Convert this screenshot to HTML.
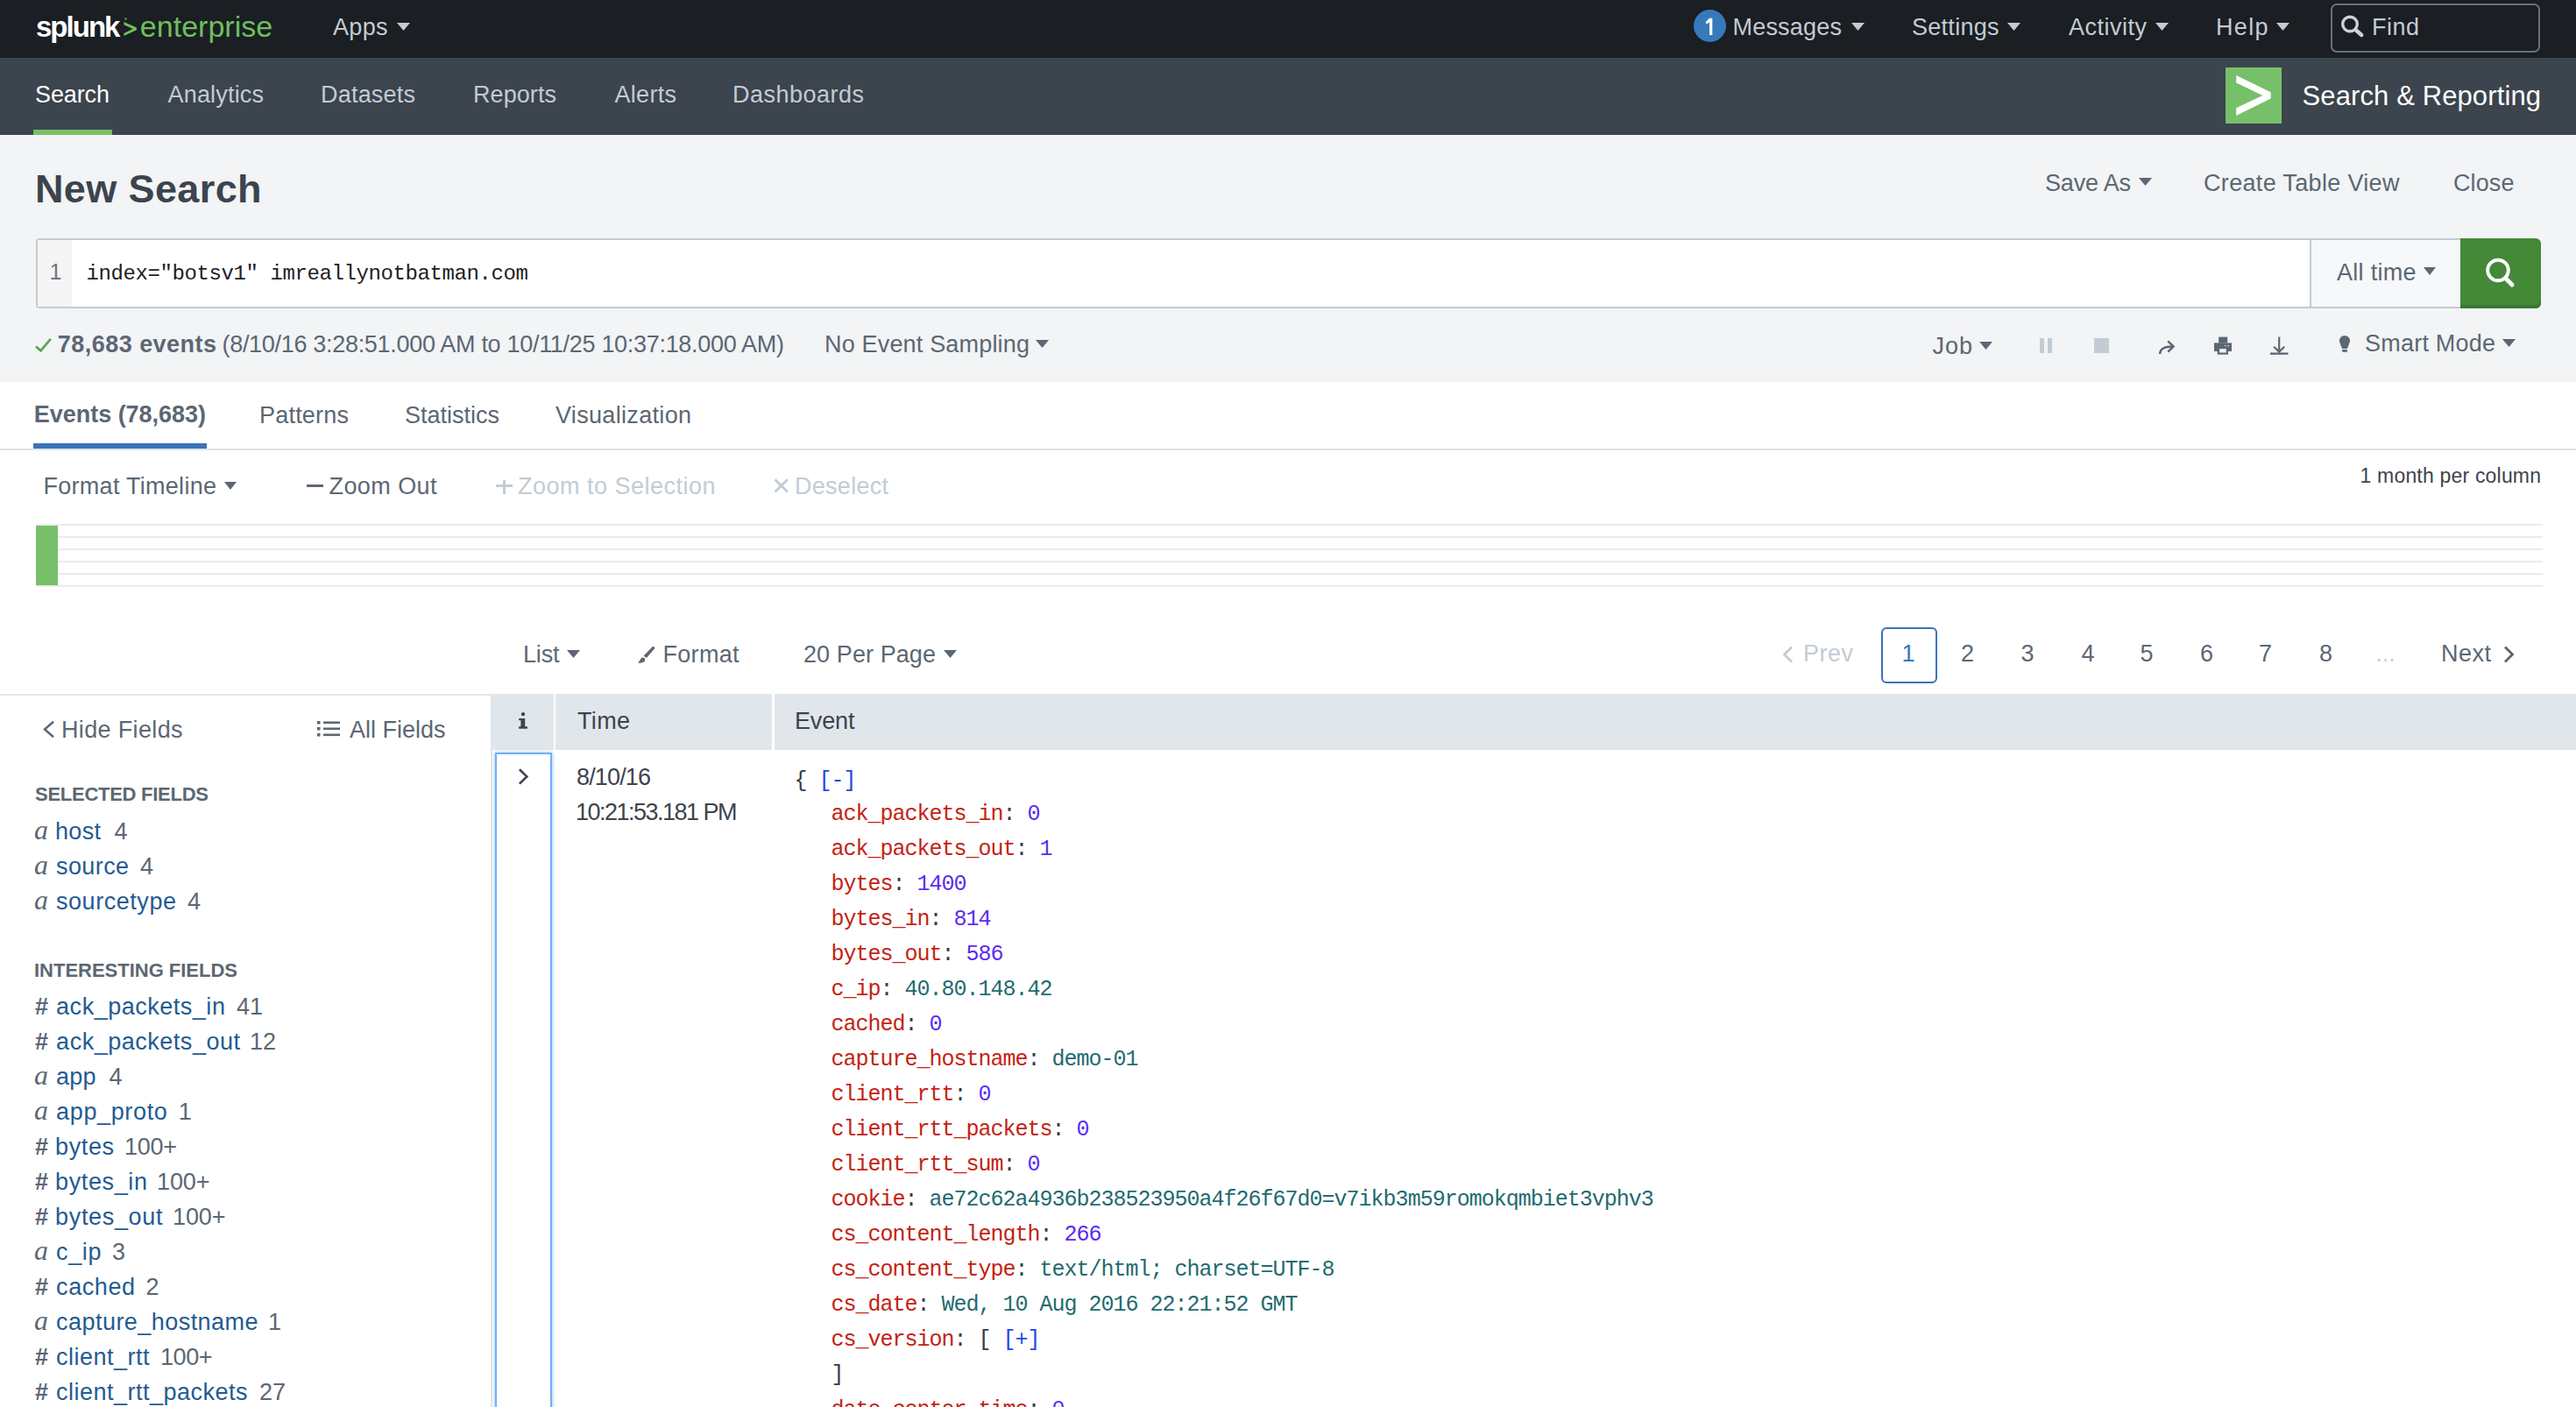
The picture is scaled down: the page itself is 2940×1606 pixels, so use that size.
<!DOCTYPE html>
<html><head><meta charset="utf-8"><title>Search | Splunk</title>
<style>
html,body{margin:0;padding:0;width:2940px;height:1606px;overflow:hidden;background:#fff}
@media (max-width:2000px){html{zoom:0.5}}
.t{position:absolute;white-space:nowrap}
.b{position:absolute}
</style></head><body>
<div class="b" style="left:0px;top:0px;width:2940px;height:66px;background:#1b1e22;"></div>
<div id="t41_42" class="t" style="left:41.00px;top:11px;font:bold 33px/40px 'Liberation Sans', sans-serif;color:#ffffff;letter-spacing:-1.985px;">splunk</div>
<svg class="b" style="left:141px;top:24px;overflow:visible" width="16" height="18" viewBox="0 0 16 18"><polygon points="0.4,1 14.9,7.6 14.9,10.2 0.4,16.9 0.4,13.9 10.5,8.9 0.4,4.2" fill="#6ebf5f"/><circle cx="2.4" cy="-2.5" r="1.4" fill="#4f8a45"/></svg>
<div id="t159_42" class="t" style="left:159.80px;top:10px;font:normal 34px/41px 'Liberation Sans', sans-serif;color:#6ebf5f;letter-spacing:0.022px;">enterprise</div>
<div id="t380_40" class="t" style="left:380.00px;top:15px;font:normal 27px/32px 'Liberation Sans', sans-serif;color:#c3cbd4;letter-spacing:0.322px;">Apps</div>
<svg class="b" style="left:453px;top:26px" width="15" height="9" viewBox="0 0 15 9"><polygon points="0,0 15,0 7.5,9" fill="#c3cbd4"/></svg>
<div class="b" style="left:1933px;top:11px;width:37px;height:37px;border-radius:50%;background:#3779bd"></div>
<svg class="b" style="left:1946px;top:20px;overflow:visible" width="10" height="21" viewBox="0 0 10 21"><polygon points="5,0.8 8.3,0.8 8.3,20 5,20 5,5.5 2,7.6 0.5,5.2" fill="#ffffff"/></svg>
<div id="t1979_40" class="t" style="left:1977.50px;top:15px;font:normal 27px/32px 'Liberation Sans', sans-serif;color:#c3cbd4;letter-spacing:0.205px;">Messages</div>
<svg class="b" style="left:2113px;top:26px" width="15" height="9" viewBox="0 0 15 9"><polygon points="0,0 15,0 7.5,9" fill="#c3cbd4"/></svg>
<div id="t2182_40" class="t" style="left:2182.00px;top:15px;font:normal 27px/32px 'Liberation Sans', sans-serif;color:#c3cbd4;letter-spacing:0.278px;">Settings</div>
<svg class="b" style="left:2291px;top:26px" width="15" height="9" viewBox="0 0 15 9"><polygon points="0,0 15,0 7.5,9" fill="#c3cbd4"/></svg>
<div id="t2361_40" class="t" style="left:2361.00px;top:15px;font:normal 27px/32px 'Liberation Sans', sans-serif;color:#c3cbd4;letter-spacing:0.499px;">Activity</div>
<svg class="b" style="left:2460px;top:26px" width="15" height="9" viewBox="0 0 15 9"><polygon points="0,0 15,0 7.5,9" fill="#c3cbd4"/></svg>
<div id="t2530_40" class="t" style="left:2529.00px;top:15px;font:normal 27px/32px 'Liberation Sans', sans-serif;color:#c3cbd4;letter-spacing:1.320px;">Help</div>
<svg class="b" style="left:2598px;top:26px" width="15" height="9" viewBox="0 0 15 9"><polygon points="0,0 15,0 7.5,9" fill="#c3cbd4"/></svg>
<div class="b" style="left:2660px;top:4px;width:239px;height:56px;box-sizing:border-box;border:2px solid #68717c;border-radius:7px"></div>
<svg class="b" style="left:2671px;top:16px;overflow:visible" width="28" height="28" viewBox="0 0 28 28"><circle cx="11" cy="11.5" r="8.3" fill="none" stroke="#cdd2d8" stroke-width="3.4"/><line x1="17.5" y1="18" x2="24.2" y2="24" stroke="#cdd2d8" stroke-width="4.4" stroke-linecap="round"/></svg>
<div id="t2708_40" class="t" style="left:2707.00px;top:15px;font:normal 27px/32px 'Liberation Sans', sans-serif;color:#c3cbd4;letter-spacing:0.495px;">Find</div>
<div class="b" style="left:0px;top:66px;width:2940px;height:88px;background:#3c444d;"></div>
<div id="t40_117" class="t" style="left:40.00px;top:92px;font:normal 27px/32px 'Liberation Sans', sans-serif;color:#ffffff;letter-spacing:-0.107px;">Search</div>
<div id="t191_117" class="t" style="left:191.50px;top:92px;font:normal 27px/32px 'Liberation Sans', sans-serif;color:#c3cbd4;letter-spacing:0.184px;">Analytics</div>
<div id="t368_117" class="t" style="left:366.00px;top:92px;font:normal 27px/32px 'Liberation Sans', sans-serif;color:#c3cbd4;letter-spacing:0.208px;">Datasets</div>
<div id="t541_117" class="t" style="left:540.00px;top:92px;font:normal 27px/32px 'Liberation Sans', sans-serif;color:#c3cbd4;letter-spacing:0.079px;">Reports</div>
<div id="t701_117" class="t" style="left:701.50px;top:92px;font:normal 27px/32px 'Liberation Sans', sans-serif;color:#c3cbd4;letter-spacing:0.298px;">Alerts</div>
<div id="t838_117" class="t" style="left:836.00px;top:92px;font:normal 27px/32px 'Liberation Sans', sans-serif;color:#c3cbd4;letter-spacing:0.491px;">Dashboards</div>
<div class="b" style="left:38px;top:148px;width:90px;height:6px;background:#78c06a;"></div>
<div class="b" style="left:2540px;top:77px;width:64px;height:64px;background:#77c06a;"></div>
<svg class="b" style="left:2540px;top:77px;overflow:visible" width="64" height="64" viewBox="0 0 64 64"><polygon points="12.2,8.9 51.7,28.2 51.7,35.6 12.2,55 12.2,46.2 42.3,31.9 12.2,17.4" fill="#ffffff"/></svg>
<div id="t2628_120" class="t" style="left:2627.50px;top:91px;font:normal 31px/37px 'Liberation Sans', sans-serif;color:#ffffff;letter-spacing:0.115px;">Search &amp; Reporting</div>
<div class="b" style="left:0px;top:154px;width:2940px;height:282px;background:#f2f4f5;"></div>
<div id="t42_232" class="t" style="left:40.00px;top:189px;font:bold 45px/54px 'Liberation Sans', sans-serif;color:#3c444d;letter-spacing:0.377px;">New Search</div>
<div id="t2334_218" class="t" style="left:2334.00px;top:193px;font:normal 27px/32px 'Liberation Sans', sans-serif;color:#5c6773;letter-spacing:-0.177px;">Save As</div>
<svg class="b" style="left:2441px;top:203px" width="15" height="9" viewBox="0 0 15 9"><polygon points="0,0 15,0 7.5,9" fill="#5c6773"/></svg>
<div id="t2516_218" class="t" style="left:2515.00px;top:193px;font:normal 27px/32px 'Liberation Sans', sans-serif;color:#5c6773;letter-spacing:0.330px;">Create Table View</div>
<div id="t2800_218" class="t" style="left:2800.00px;top:193px;font:normal 27px/32px 'Liberation Sans', sans-serif;color:#5c6773;letter-spacing:0.115px;">Close</div>
<div class="b" style="left:41px;top:272px;width:2767px;height:80px;box-sizing:border-box;border:2px solid #c3cbd4;border-right:none;border-radius:4px 0 0 4px;background:#fff"></div>
<div class="b" style="left:43px;top:274px;width:39px;height:76px;background:#f5f5f5;"></div>
<div id="t56_319" class="t" style="left:56.60px;top:295px;font:normal 25px/30px 'Liberation Sans', sans-serif;color:#6b7785;letter-spacing:0.000px;">1</div>
<div id="t99_319" class="t" style="left:98.50px;top:298px;font:normal 24px/29px 'Liberation Mono', monospace;color:#1e2124;letter-spacing:-0.399px;">index="botsv1" imreallynotbatman.com</div>
<div class="b" style="left:2636px;top:272px;width:172px;height:80px;box-sizing:border-box;border:2px solid #c3cbd4;border-right:none;background:#f7f8fa"></div>
<div id="t2666_320" class="t" style="left:2667.00px;top:295px;font:normal 27px/32px 'Liberation Sans', sans-serif;color:#5c6773;letter-spacing:0.285px;">All time</div>
<svg class="b" style="left:2766px;top:305px" width="14" height="9" viewBox="0 0 14 9"><polygon points="0,0 14,0 7.0,9" fill="#5c6773"/></svg>
<div class="b" style="left:2808px;top:272px;width:92px;height:80px;background:#438938;border-radius:0 6px 6px 0;box-shadow:inset 0 -4px 0 #3a7832"></div>
<svg class="b" style="left:2836px;top:294px;overflow:visible" width="36" height="36" viewBox="0 0 36 36"><circle cx="15" cy="14.5" r="11.8" fill="none" stroke="#ffffff" stroke-width="3.9"/><line x1="23.5" y1="23.5" x2="31" y2="31" stroke="#ffffff" stroke-width="5" stroke-linecap="round"/></svg>
<svg class="b" style="left:40px;top:385px;overflow:visible" width="19" height="17" viewBox="0 0 19 17"><polyline points="1,10.5 6.5,15.3 17.8,1.8" fill="none" stroke="#5ea354" stroke-width="2.8"/></svg>
<div id="t66_402" class="t" style="left:65.80px;top:377px;font:bold 27px/32px 'Liberation Sans', sans-serif;color:#5c6773;letter-spacing:0.464px;">78,683 events</div>
<div id="t254_402" class="t" style="left:253.50px;top:377px;font:normal 27px/32px 'Liberation Sans', sans-serif;color:#5c6773;letter-spacing:-0.304px;">(8/10/16 3:28:51.000 AM to 10/11/25 10:37:18.000 AM)</div>
<div id="t943_402" class="t" style="left:941.00px;top:377px;font:normal 27px/32px 'Liberation Sans', sans-serif;color:#5c6773;letter-spacing:0.180px;">No Event Sampling</div>
<svg class="b" style="left:1182px;top:388px" width="15" height="9" viewBox="0 0 15 9"><polygon points="0,0 15,0 7.5,9" fill="#5c6773"/></svg>
<div id="t2205_404" class="t" style="left:2205.50px;top:379px;font:normal 27px/32px 'Liberation Sans', sans-serif;color:#5c6773;letter-spacing:0.988px;">Job</div>
<svg class="b" style="left:2259px;top:390px" width="15" height="9" viewBox="0 0 15 9"><polygon points="0,0 15,0 7.5,9" fill="#5c6773"/></svg>
<div class="b" style="left:2328px;top:386px;width:5px;height:17px;background:#c3cbd4;"></div>
<div class="b" style="left:2337px;top:386px;width:5px;height:17px;background:#c3cbd4;"></div>
<div class="b" style="left:2390px;top:386px;width:17px;height:17px;background:#c3cbd4;"></div>
<svg class="b" style="left:2460px;top:385px;overflow:visible" width="26" height="22" viewBox="0 0 26 22"><path d="M5.2,19 C5.2,13.5 9,10.5 20.5,10.5" fill="none" stroke="#5c6773" stroke-width="2.5"/><polyline points="14.3,4.4 20.6,10.5 14.3,16.6" fill="none" stroke="#5c6773" stroke-width="2.5"/></svg>
<svg class="b" style="left:2527px;top:384px;overflow:visible" width="20" height="21" viewBox="0 0 20 21"><rect x="5.2" y="0.6" width="10" height="7" fill="#5c6773"/><rect x="0" y="7.4" width="20" height="9.6" fill="#5c6773"/><rect x="3.8" y="13.7" width="12.2" height="7" fill="#5c6773"/><rect x="6.2" y="14.2" width="7.6" height="4.3" fill="#f2f4f5"/><rect x="12.3" y="10" width="1.3" height="1.3" fill="#f2f4f5"/><rect x="15.7" y="10" width="1.3" height="1.3" fill="#f2f4f5"/></svg>
<svg class="b" style="left:2591px;top:384px;overflow:visible" width="21" height="21" viewBox="0 0 21 21"><line x1="10.2" y1="0.6" x2="10.2" y2="17" stroke="#5c6773" stroke-width="2.2"/><polyline points="4.2,11.7 10.2,17.6 16.2,11.7" fill="none" stroke="#5c6773" stroke-width="2.2"/><rect x="0" y="18.5" width="20.4" height="2.3" fill="#5c6773"/></svg>
<svg class="b" style="left:2669px;top:382px;overflow:visible" width="14" height="21" viewBox="0 0 14 21"><circle cx="7" cy="7" r="6.1" fill="#5c6773"/><polygon points="1.8,10.5 12.2,10.5 9.8,16 4.2,16" fill="#5c6773"/><rect x="4.2" y="17" width="5.6" height="2.8" fill="#5c6773"/></svg>
<div id="t2700_401" class="t" style="left:2699.00px;top:376px;font:normal 27px/32px 'Liberation Sans', sans-serif;color:#5c6773;letter-spacing:0.218px;">Smart Mode</div>
<svg class="b" style="left:2856px;top:387px" width="15" height="9" viewBox="0 0 15 9"><polygon points="0,0 15,0 7.5,9" fill="#5c6773"/></svg>
<div class="b" style="left:0px;top:436px;width:2940px;height:76px;background:#ffffff;"></div>
<div id="t40_482" class="t" style="left:38.80px;top:457px;font:bold 27px/32px 'Liberation Sans', sans-serif;color:#5c6773;letter-spacing:-0.030px;">Events (78,683)</div>
<div id="t298_483" class="t" style="left:296.00px;top:458px;font:normal 27px/32px 'Liberation Sans', sans-serif;color:#5c6773;letter-spacing:0.207px;">Patterns</div>
<div id="t462_483" class="t" style="left:462.00px;top:458px;font:normal 27px/32px 'Liberation Sans', sans-serif;color:#5c6773;letter-spacing:-0.003px;">Statistics</div>
<div id="t634_483" class="t" style="left:634.00px;top:458px;font:normal 27px/32px 'Liberation Sans', sans-serif;color:#5c6773;letter-spacing:0.326px;">Visualization</div>
<div class="b" style="left:38px;top:506px;width:198px;height:6px;background:#3a73b9;"></div>
<div class="b" style="left:0px;top:512px;width:2940px;height:2px;background:#dfe3e8;"></div>
<div id="t51_564" class="t" style="left:49.50px;top:539px;font:normal 27px/32px 'Liberation Sans', sans-serif;color:#5c6773;letter-spacing:0.281px;">Format Timeline</div>
<svg class="b" style="left:256px;top:550px" width="14" height="9" viewBox="0 0 14 9"><polygon points="0,0 14,0 7.0,9" fill="#5c6773"/></svg>
<div class="b" style="left:350px;top:553px;width:19px;height:3px;background:#5c6773;"></div>
<div id="t375_564" class="t" style="left:375.50px;top:539px;font:normal 27px/32px 'Liberation Sans', sans-serif;color:#5c6773;letter-spacing:0.423px;">Zoom Out</div>
<div class="b" style="left:566px;top:553px;width:19px;height:3px;background:#c3cbd4;"></div>
<div class="b" style="left:574px;top:548px;width:3px;height:16px;background:#c3cbd4;"></div>
<div id="t592_564" class="t" style="left:591.00px;top:539px;font:normal 27px/32px 'Liberation Sans', sans-serif;color:#c3cbd4;letter-spacing:0.492px;">Zoom to Selection</div>
<svg class="b" style="left:883px;top:546px;overflow:visible" width="17" height="17" viewBox="0 0 17 17"><line x1="1.5" y1="1.2" x2="15.8" y2="15.5" stroke="#c3cbd4" stroke-width="2.8"/><line x1="15.8" y1="1.2" x2="1.5" y2="15.5" stroke="#c3cbd4" stroke-width="2.8"/></svg>
<div id="t909_564" class="t" style="left:907.00px;top:539px;font:normal 27px/32px 'Liberation Sans', sans-serif;color:#c3cbd4;letter-spacing:0.278px;">Deselect</div>
<div id="t2694_551" class="t" style="left:2693.50px;top:529px;font:normal 23px/28px 'Liberation Sans', sans-serif;color:#3c444d;letter-spacing:0.190px;">1 month per column</div>
<div class="b" style="left:41px;top:598px;width:2861px;height:2px;background:#ebebeb;"></div>
<div class="b" style="left:41px;top:612px;width:2861px;height:2px;background:#ebebeb;"></div>
<div class="b" style="left:41px;top:626px;width:2861px;height:2px;background:#ebebeb;"></div>
<div class="b" style="left:41px;top:640px;width:2861px;height:2px;background:#ebebeb;"></div>
<div class="b" style="left:41px;top:654px;width:2861px;height:2px;background:#ebebeb;"></div>
<div class="b" style="left:41px;top:668px;width:2861px;height:2px;background:#ebebeb;"></div>
<div class="b" style="left:41px;top:600px;width:25px;height:68px;background:#77c06a;"></div>
<div id="t598_756" class="t" style="left:597.00px;top:731px;font:normal 27px/32px 'Liberation Sans', sans-serif;color:#5c6773;letter-spacing:-0.171px;">List</div>
<svg class="b" style="left:647px;top:742px" width="15" height="9" viewBox="0 0 15 9"><polygon points="0,0 15,0 7.5,9" fill="#5c6773"/></svg>
<svg class="b" style="left:726px;top:736px;overflow:visible" width="24" height="23" viewBox="0 0 24 23"><path d="M18.6,2.3 C19.6,1.4 21.4,2.6 21.4,4 L11.8,14.9 L8.6,12.5 Z" fill="#5c6773"/><path d="M7.4,14.6 C9.5,14.2 10.8,16.4 10,18.3 C9,20.2 6.5,20.9 2.2,20.9 C4.2,18.6 4.8,15.2 7.4,14.6 Z" fill="#5c6773"/></svg>
<div id="t758_756" class="t" style="left:756.50px;top:731px;font:normal 27px/32px 'Liberation Sans', sans-serif;color:#5c6773;letter-spacing:0.298px;">Format</div>
<div id="t917_756" class="t" style="left:917.00px;top:731px;font:normal 27px/32px 'Liberation Sans', sans-serif;color:#5c6773;letter-spacing:0.088px;">20 Per Page</div>
<svg class="b" style="left:1077px;top:742px" width="15" height="9" viewBox="0 0 15 9"><polygon points="0,0 15,0 7.5,9" fill="#5c6773"/></svg>
<svg class="b" style="left:2034px;top:737px;overflow:visible" width="13" height="20" viewBox="0 0 13 20"><polyline points="11,1.5 2.5,10 11,18.5" fill="none" stroke="#c3cbd4" stroke-width="2.8"/></svg>
<div id="t2060_755" class="t" style="left:2058.00px;top:730px;font:normal 27px/32px 'Liberation Sans', sans-serif;color:#c3cbd4;letter-spacing:0.496px;">Prev</div>
<div class="b" style="left:2147px;top:716px;width:64px;height:64px;box-sizing:border-box;border:2px solid #3a73b9;border-radius:6px"></div>
<div id="t2172_755" class="t" style="left:2170.50px;top:730px;font:normal 27px/32px 'Liberation Sans', sans-serif;color:#3a73b9;letter-spacing:0.000px;">1</div>
<div id="t2239_755" class="t" style="left:2238.00px;top:730px;font:normal 27px/32px 'Liberation Sans', sans-serif;color:#5c6773;letter-spacing:0.000px;">2</div>
<div id="t2307_755" class="t" style="left:2306.50px;top:730px;font:normal 27px/32px 'Liberation Sans', sans-serif;color:#5c6773;letter-spacing:0.000px;">3</div>
<div id="t2375_755" class="t" style="left:2375.50px;top:730px;font:normal 27px/32px 'Liberation Sans', sans-serif;color:#5c6773;letter-spacing:0.000px;">4</div>
<div id="t2443_755" class="t" style="left:2442.50px;top:730px;font:normal 27px/32px 'Liberation Sans', sans-serif;color:#5c6773;letter-spacing:0.000px;">5</div>
<div id="t2511_755" class="t" style="left:2511.00px;top:730px;font:normal 27px/32px 'Liberation Sans', sans-serif;color:#5c6773;letter-spacing:0.000px;">6</div>
<div id="t2579_755" class="t" style="left:2578.00px;top:730px;font:normal 27px/32px 'Liberation Sans', sans-serif;color:#5c6773;letter-spacing:0.000px;">7</div>
<div id="t2647_755" class="t" style="left:2647.00px;top:730px;font:normal 27px/32px 'Liberation Sans', sans-serif;color:#5c6773;letter-spacing:0.000px;">8</div>
<div id="t2713_755" class="t" style="left:2711.50px;top:731px;font:normal 26px/31px 'Liberation Sans', sans-serif;color:#c3cbd4;letter-spacing:0.171px;">...</div>
<div id="t2787_755" class="t" style="left:2786.00px;top:730px;font:normal 27px/32px 'Liberation Sans', sans-serif;color:#5c6773;letter-spacing:0.496px;">Next</div>
<svg class="b" style="left:2857px;top:737px;overflow:visible" width="13" height="20" viewBox="0 0 13 20"><polyline points="2,1.5 10.5,10 2,18.5" fill="none" stroke="#5c6773" stroke-width="2.8"/></svg>
<div class="b" style="left:0px;top:792px;width:560px;height:2px;background:#e1e6eb;"></div>
<svg class="b" style="left:49px;top:823px;overflow:visible" width="13" height="19" viewBox="0 0 13 19"><polyline points="12,0.8 2,9.5 12,18.2" fill="none" stroke="#5c6773" stroke-width="2.5"/></svg>
<div id="t71_842" class="t" style="left:70.00px;top:817px;font:normal 27px/32px 'Liberation Sans', sans-serif;color:#5c6773;letter-spacing:0.345px;">Hide Fields</div>
<svg class="b" style="left:362px;top:822px;overflow:visible" width="26" height="20" viewBox="0 0 26 20"><rect x="0" y="1" width="3.5" height="3.5" fill="#5c6773"/><rect x="7" y="1.5" width="19" height="2.6" fill="#5c6773"/><rect x="0" y="8" width="3.5" height="3.5" fill="#5c6773"/><rect x="7" y="8.5" width="19" height="2.6" fill="#5c6773"/><rect x="0" y="15" width="3.5" height="3.5" fill="#5c6773"/><rect x="7" y="15.5" width="19" height="2.6" fill="#5c6773"/></svg>
<div id="t399_842" class="t" style="left:399.00px;top:817px;font:normal 27px/32px 'Liberation Sans', sans-serif;color:#5c6773;letter-spacing:-0.004px;">All Fields</div>
<div id="t40_915" class="t" style="left:40.00px;top:894px;font:bold 22px/26px 'Liberation Sans', sans-serif;color:#5c6773;letter-spacing:-0.264px;">SELECTED FIELDS</div>
<div class="t" style="left:39px;top:930px;font:italic 32px/34px 'Liberation Serif', serif;color:#5c6773">a</div>
<div id="t64_958" class="t" style="left:63.00px;top:933px;font:normal 27px/32px 'Liberation Sans', sans-serif;color:#245b93;letter-spacing:0.357px;">host</div>
<div id="t130_958" class="t" style="left:130.40px;top:933px;font:normal 27px/32px 'Liberation Sans', sans-serif;color:#5c6773;letter-spacing:0.000px;">4</div>
<div class="t" style="left:39px;top:970px;font:italic 32px/34px 'Liberation Serif', serif;color:#5c6773">a</div>
<div id="t64_998" class="t" style="left:64.00px;top:973px;font:normal 27px/32px 'Liberation Sans', sans-serif;color:#245b93;letter-spacing:0.415px;">source</div>
<div id="t160_998" class="t" style="left:159.90px;top:973px;font:normal 27px/32px 'Liberation Sans', sans-serif;color:#5c6773;letter-spacing:0.000px;">4</div>
<div class="t" style="left:39px;top:1010px;font:italic 32px/34px 'Liberation Serif', serif;color:#5c6773">a</div>
<div id="t64_1038" class="t" style="left:64.00px;top:1013px;font:normal 27px/32px 'Liberation Sans', sans-serif;color:#245b93;letter-spacing:0.546px;">sourcetype</div>
<div id="t214_1038" class="t" style="left:214.10px;top:1013px;font:normal 27px/32px 'Liberation Sans', sans-serif;color:#5c6773;letter-spacing:0.000px;">4</div>
<div id="t40_1115" class="t" style="left:39.00px;top:1095px;font:bold 22px/26px 'Liberation Sans', sans-serif;color:#5c6773;letter-spacing:-0.014px;">INTERESTING FIELDS</div>
<div id="t40_1158" class="t" style="left:40.00px;top:1133px;font:bold 27px/32px 'Liberation Sans', sans-serif;color:#5c6773;letter-spacing:0.000px;">#</div>
<div id="t64_1158" class="t" style="left:64.10px;top:1133px;font:normal 27px/32px 'Liberation Sans', sans-serif;color:#245b93;letter-spacing:0.515px;">ack_packets_in</div>
<div id="t270_1158" class="t" style="left:270.00px;top:1133px;font:normal 27px/32px 'Liberation Sans', sans-serif;color:#5c6773;letter-spacing:0.000px;">41</div>
<div id="t40_1198" class="t" style="left:40.00px;top:1173px;font:bold 27px/32px 'Liberation Sans', sans-serif;color:#5c6773;letter-spacing:0.000px;">#</div>
<div id="t64_1198" class="t" style="left:64.10px;top:1173px;font:normal 27px/32px 'Liberation Sans', sans-serif;color:#245b93;letter-spacing:0.519px;">ack_packets_out</div>
<div id="t285_1198" class="t" style="left:285.00px;top:1173px;font:normal 27px/32px 'Liberation Sans', sans-serif;color:#5c6773;letter-spacing:0.000px;">12</div>
<div class="t" style="left:39px;top:1210px;font:italic 32px/34px 'Liberation Serif', serif;color:#5c6773">a</div>
<div id="t64_1238" class="t" style="left:64.10px;top:1213px;font:normal 27px/32px 'Liberation Sans', sans-serif;color:#245b93;letter-spacing:0.182px;">app</div>
<div id="t124_1238" class="t" style="left:124.50px;top:1213px;font:normal 27px/32px 'Liberation Sans', sans-serif;color:#5c6773;letter-spacing:0.000px;">4</div>
<div class="t" style="left:39px;top:1250px;font:italic 32px/34px 'Liberation Serif', serif;color:#5c6773">a</div>
<div id="t64_1278" class="t" style="left:64.10px;top:1253px;font:normal 27px/32px 'Liberation Sans', sans-serif;color:#245b93;letter-spacing:0.636px;">app_proto</div>
<div id="t205_1278" class="t" style="left:203.80px;top:1253px;font:normal 27px/32px 'Liberation Sans', sans-serif;color:#5c6773;letter-spacing:0.000px;">1</div>
<div id="t40_1318" class="t" style="left:40.00px;top:1293px;font:bold 27px/32px 'Liberation Sans', sans-serif;color:#5c6773;letter-spacing:0.000px;">#</div>
<div id="t64_1318" class="t" style="left:63.10px;top:1293px;font:normal 27px/32px 'Liberation Sans', sans-serif;color:#245b93;letter-spacing:0.617px;">bytes</div>
<div id="t144_1318" class="t" style="left:142.00px;top:1293px;font:normal 27px/32px 'Liberation Sans', sans-serif;color:#5c6773;letter-spacing:-0.268px;">100+</div>
<div id="t40_1358" class="t" style="left:40.00px;top:1333px;font:bold 27px/32px 'Liberation Sans', sans-serif;color:#5c6773;letter-spacing:0.000px;">#</div>
<div id="t64_1358" class="t" style="left:63.10px;top:1333px;font:normal 27px/32px 'Liberation Sans', sans-serif;color:#245b93;letter-spacing:0.618px;">bytes_in</div>
<div id="t181_1358" class="t" style="left:179.00px;top:1333px;font:normal 27px/32px 'Liberation Sans', sans-serif;color:#5c6773;letter-spacing:-0.101px;">100+</div>
<div id="t40_1398" class="t" style="left:40.00px;top:1373px;font:bold 27px/32px 'Liberation Sans', sans-serif;color:#5c6773;letter-spacing:0.000px;">#</div>
<div id="t64_1398" class="t" style="left:63.10px;top:1373px;font:normal 27px/32px 'Liberation Sans', sans-serif;color:#245b93;letter-spacing:0.654px;">bytes_out</div>
<div id="t199_1398" class="t" style="left:197.00px;top:1373px;font:normal 27px/32px 'Liberation Sans', sans-serif;color:#5c6773;letter-spacing:-0.135px;">100+</div>
<div class="t" style="left:39px;top:1410px;font:italic 32px/34px 'Liberation Serif', serif;color:#5c6773">a</div>
<div id="t64_1438" class="t" style="left:64.10px;top:1413px;font:normal 27px/32px 'Liberation Sans', sans-serif;color:#245b93;letter-spacing:0.594px;">c_ip</div>
<div id="t129_1438" class="t" style="left:128.00px;top:1413px;font:normal 27px/32px 'Liberation Sans', sans-serif;color:#5c6773;letter-spacing:0.000px;">3</div>
<div id="t40_1478" class="t" style="left:40.00px;top:1453px;font:bold 27px/32px 'Liberation Sans', sans-serif;color:#5c6773;letter-spacing:0.000px;">#</div>
<div id="t64_1478" class="t" style="left:64.10px;top:1453px;font:normal 27px/32px 'Liberation Sans', sans-serif;color:#245b93;letter-spacing:0.565px;">cached</div>
<div id="t167_1478" class="t" style="left:166.50px;top:1453px;font:normal 27px/32px 'Liberation Sans', sans-serif;color:#5c6773;letter-spacing:0.000px;">2</div>
<div class="t" style="left:39px;top:1490px;font:italic 32px/34px 'Liberation Serif', serif;color:#5c6773">a</div>
<div id="t64_1518" class="t" style="left:64.10px;top:1493px;font:normal 27px/32px 'Liberation Sans', sans-serif;color:#245b93;letter-spacing:0.451px;">capture_hostname</div>
<div id="t307_1518" class="t" style="left:305.90px;top:1493px;font:normal 27px/32px 'Liberation Sans', sans-serif;color:#5c6773;letter-spacing:0.000px;">1</div>
<div id="t40_1558" class="t" style="left:40.00px;top:1533px;font:bold 27px/32px 'Liberation Sans', sans-serif;color:#5c6773;letter-spacing:0.000px;">#</div>
<div id="t64_1558" class="t" style="left:64.10px;top:1533px;font:normal 27px/32px 'Liberation Sans', sans-serif;color:#245b93;letter-spacing:0.496px;">client_rtt</div>
<div id="t184_1558" class="t" style="left:182.90px;top:1533px;font:normal 27px/32px 'Liberation Sans', sans-serif;color:#5c6773;letter-spacing:-0.368px;">100+</div>
<div id="t40_1598" class="t" style="left:40.00px;top:1573px;font:bold 27px/32px 'Liberation Sans', sans-serif;color:#5c6773;letter-spacing:0.000px;">#</div>
<div id="t64_1598" class="t" style="left:64.10px;top:1573px;font:normal 27px/32px 'Liberation Sans', sans-serif;color:#245b93;letter-spacing:0.493px;">client_rtt_packets</div>
<div id="t296_1598" class="t" style="left:296.00px;top:1573px;font:normal 27px/32px 'Liberation Sans', sans-serif;color:#5c6773;letter-spacing:0.000px;">27</div>
<div class="b" style="left:560px;top:792px;width:2380px;height:64px;background:#e1e6eb;"></div>
<div class="b" style="left:632px;top:792px;width:2px;height:64px;background:#ffffff;"></div>
<div class="b" style="left:881px;top:792px;width:3px;height:64px;background:#ffffff;"></div>
<svg class="b" style="left:590px;top:812px;overflow:visible" width="13" height="21" viewBox="0 0 13 21"><circle cx="7" cy="3.2" r="2.1" fill="#3c444d"/><path d="M2.2,7.9 H9.2 V17.3 H11.9 V19.7 H2.2 V17.3 H4.4 V10.2 H2.2 Z" fill="#3c444d"/></svg>
<div id="t658_832" class="t" style="left:659.00px;top:807px;font:normal 27px/32px 'Liberation Sans', sans-serif;color:#3c444d;letter-spacing:0.335px;">Time</div>
<div id="t908_832" class="t" style="left:907.00px;top:807px;font:normal 27px/32px 'Liberation Sans', sans-serif;color:#3c444d;letter-spacing:-0.135px;">Event</div>
<div class="b" style="left:560px;top:856px;width:2px;height:750px;background:#e1e6eb;"></div>
<div class="b" style="left:565px;top:859px;width:65px;height:760px;box-sizing:border-box;border:2px solid #6db1f7;box-shadow:0 0 4px rgba(120,180,245,0.9);background:#fff"></div>
<svg class="b" style="left:590px;top:877px;overflow:visible" width="14" height="20" viewBox="0 0 14 20"><polyline points="2.9,1.2 11.3,9.4 2.9,17.6" fill="none" stroke="#3c444d" stroke-width="2.6"/></svg>
<div id="t658_896" class="t" style="left:658.00px;top:871px;font:normal 27px/32px 'Liberation Sans', sans-serif;color:#3c444d;letter-spacing:-0.845px;">8/10/16</div>
<div id="t658_936" class="t" style="left:657.00px;top:911px;font:normal 27px/32px 'Liberation Sans', sans-serif;color:#3c444d;letter-spacing:-1.511px;">10:21:53.181 PM</div>
<div id="j0" class="t" style="left:906.50px;top:877px;font:25px/30px 'Liberation Mono', monospace;letter-spacing:-1.000px"><span style="color:#333b44">{</span><span style="color:#333b44"> </span><span style="color:#2147e6">[-]</span></div>
<div id="j1" class="t" style="left:948.50px;top:915px;font:25px/30px 'Liberation Mono', monospace;letter-spacing:-1.000px"><span style="color:#c42212">ack_packets_in</span><span style="color:#333b44">: </span><span style="color:#5b2bf0">0</span></div>
<div id="j2" class="t" style="left:948.50px;top:955px;font:25px/30px 'Liberation Mono', monospace;letter-spacing:-1.000px"><span style="color:#c42212">ack_packets_out</span><span style="color:#333b44">: </span><span style="color:#5b2bf0">1</span></div>
<div id="j3" class="t" style="left:948.50px;top:995px;font:25px/30px 'Liberation Mono', monospace;letter-spacing:-1.000px"><span style="color:#c42212">bytes</span><span style="color:#333b44">: </span><span style="color:#5b2bf0">1400</span></div>
<div id="j4" class="t" style="left:948.50px;top:1035px;font:25px/30px 'Liberation Mono', monospace;letter-spacing:-1.000px"><span style="color:#c42212">bytes_in</span><span style="color:#333b44">: </span><span style="color:#5b2bf0">814</span></div>
<div id="j5" class="t" style="left:948.50px;top:1075px;font:25px/30px 'Liberation Mono', monospace;letter-spacing:-1.000px"><span style="color:#c42212">bytes_out</span><span style="color:#333b44">: </span><span style="color:#5b2bf0">586</span></div>
<div id="j6" class="t" style="left:948.50px;top:1115px;font:25px/30px 'Liberation Mono', monospace;letter-spacing:-1.000px"><span style="color:#c42212">c_ip</span><span style="color:#333b44">: </span><span style="color:#1f6b6f">40.80.148.42</span></div>
<div id="j7" class="t" style="left:948.50px;top:1155px;font:25px/30px 'Liberation Mono', monospace;letter-spacing:-1.000px"><span style="color:#c42212">cached</span><span style="color:#333b44">: </span><span style="color:#5b2bf0">0</span></div>
<div id="j8" class="t" style="left:948.50px;top:1195px;font:25px/30px 'Liberation Mono', monospace;letter-spacing:-1.000px"><span style="color:#c42212">capture_hostname</span><span style="color:#333b44">: </span><span style="color:#1f6b6f">demo-01</span></div>
<div id="j9" class="t" style="left:948.50px;top:1235px;font:25px/30px 'Liberation Mono', monospace;letter-spacing:-1.000px"><span style="color:#c42212">client_rtt</span><span style="color:#333b44">: </span><span style="color:#5b2bf0">0</span></div>
<div id="j10" class="t" style="left:948.50px;top:1275px;font:25px/30px 'Liberation Mono', monospace;letter-spacing:-1.000px"><span style="color:#c42212">client_rtt_packets</span><span style="color:#333b44">: </span><span style="color:#5b2bf0">0</span></div>
<div id="j11" class="t" style="left:948.50px;top:1315px;font:25px/30px 'Liberation Mono', monospace;letter-spacing:-1.000px"><span style="color:#c42212">client_rtt_sum</span><span style="color:#333b44">: </span><span style="color:#5b2bf0">0</span></div>
<div id="j12" class="t" style="left:948.50px;top:1355px;font:25px/30px 'Liberation Mono', monospace;letter-spacing:-1.000px"><span style="color:#c42212">cookie</span><span style="color:#333b44">: </span><span style="color:#1f6b6f">ae72c62a4936b238523950a4f26f67d0=v7ikb3m59romokqmbiet3vphv3</span></div>
<div id="j13" class="t" style="left:948.50px;top:1395px;font:25px/30px 'Liberation Mono', monospace;letter-spacing:-1.000px"><span style="color:#c42212">cs_content_length</span><span style="color:#333b44">: </span><span style="color:#5b2bf0">266</span></div>
<div id="j14" class="t" style="left:948.50px;top:1435px;font:25px/30px 'Liberation Mono', monospace;letter-spacing:-1.000px"><span style="color:#c42212">cs_content_type</span><span style="color:#333b44">: </span><span style="color:#1f6b6f">text/html; charset=UTF-8</span></div>
<div id="j15" class="t" style="left:948.50px;top:1475px;font:25px/30px 'Liberation Mono', monospace;letter-spacing:-1.000px"><span style="color:#c42212">cs_date</span><span style="color:#333b44">: </span><span style="color:#1f6b6f">Wed, 10 Aug 2016 22:21:52 GMT</span></div>
<div id="j16" class="t" style="left:948.50px;top:1515px;font:25px/30px 'Liberation Mono', monospace;letter-spacing:-1.000px"><span style="color:#c42212">cs_version</span><span style="color:#333b44">: </span><span style="color:#333b44">[ </span><span style="color:#2147e6">[+]</span></div>
<div id="j17" class="t" style="left:948.50px;top:1555px;font:25px/30px 'Liberation Mono', monospace;letter-spacing:-1.000px"><span style="color:#333b44">]</span></div>
<div id="j18" class="t" style="left:948.50px;top:1595px;font:25px/30px 'Liberation Mono', monospace;letter-spacing:-1.000px"><span style="color:#c42212">date_center_time</span><span style="color:#333b44">: </span><span style="color:#5b2bf0">0</span></div>
</body></html>
